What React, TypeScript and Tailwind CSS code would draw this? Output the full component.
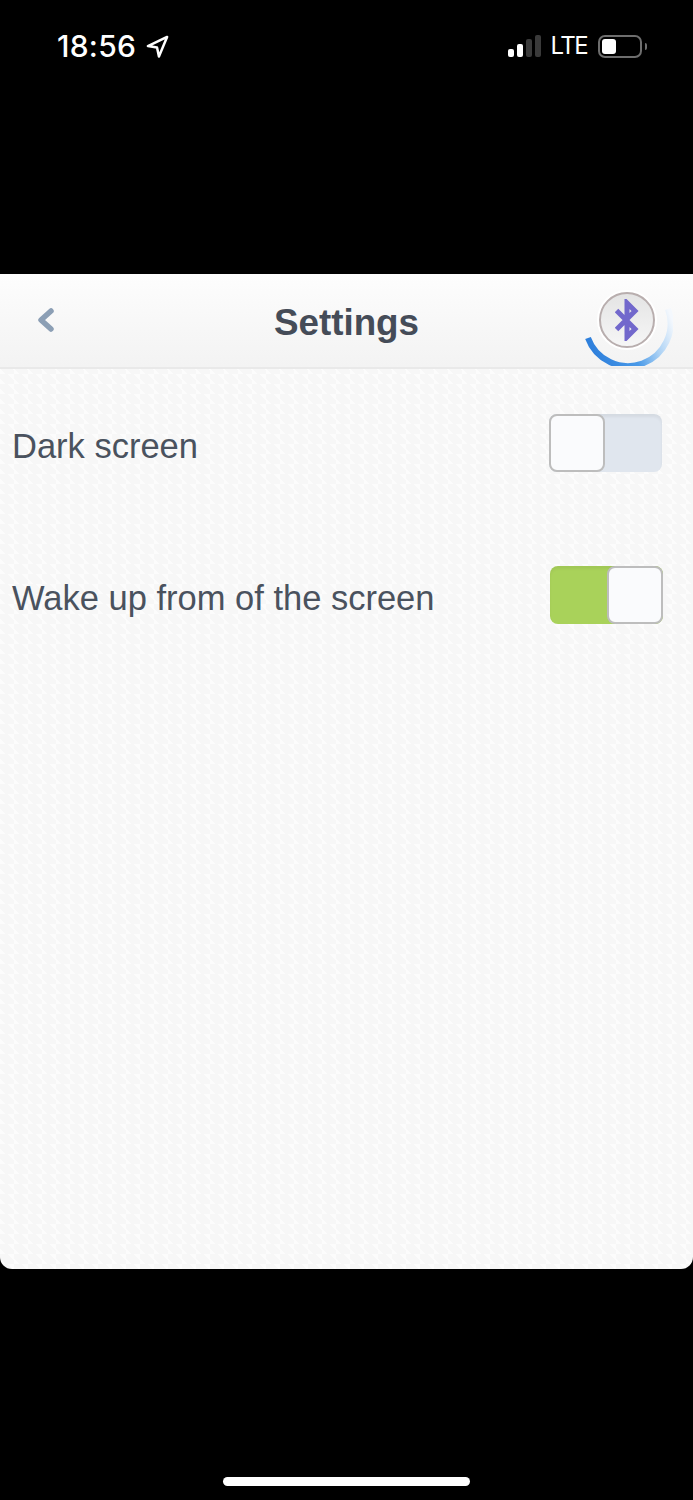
const textFont = "font-['Liberation_Sans',Arial,sans-serif]";

function StatusBar() {
  return (
    <div className="h-[274px] bg-black">
      <div className="flex h-[92px] items-center justify-between pl-[57px] pr-[46px] text-white">
        <div className="flex items-center gap-[10px]">
          <span className="font-['Inter',sans-serif] text-[30px] font-medium leading-none tracking-[0.25px]">18:56</span>
          <svg width="23" height="23" viewBox="0 0 24 24" fill="none" stroke="white" strokeWidth="2.6" strokeLinejoin="round">
            <path d="M22 2 2 11.5l9.5 1.5 2 9.5z" />
          </svg>
        </div>
        <div className="flex items-center">
          <div className="flex h-[22px] items-end gap-[3px]">
            <span className="h-[8px] w-[6px] rounded-[2px] bg-white" />
            <span className="h-[13px] w-[6px] rounded-[2px] bg-white" />
            <span className="h-[18px] w-[6px] rounded-[2px] bg-[#3a3a3a]" />
            <span className="h-[22px] w-[6px] rounded-[2px] bg-[#3a3a3a]" />
          </div>
          <span className="ml-[10px] font-['Inter',sans-serif] text-[24px] font-normal leading-none tracking-[-1.6px]">LTE</span>
          <div className="ml-[11px] flex h-[23px] w-[44px] items-center rounded-[7px] border-2 border-[#6e6e6e] p-[2px]">
            <span className="h-[15px] w-[14px] rounded-[3px] bg-white" />
          </div>
          <span className="ml-[3px] h-[7px] w-[2px] rounded-r-[2px] bg-[#6e6e6e]" />
        </div>
      </div>
    </div>
  );
}

function BluetoothButton() {
  return (
    <div className="relative h-[90px] w-[90px]">
      <svg className="absolute left-0 top-0" width="90" height="90" viewBox="0 0 90 90" fill="none">
        <defs>
          <linearGradient id="spin" x1="5" y1="62" x2="85" y2="33" gradientUnits="userSpaceOnUse">
            <stop offset="0" stopColor="#2f80dc" />
            <stop offset="0.45" stopColor="#4a9ae8" />
            <stop offset="0.72" stopColor="#a9d0f4" />
            <stop offset="1" stopColor="#f4f8fd" />
          </linearGradient>
        </defs>
        <path d="M5 62A42 42 0 0 0 85 33" stroke="url(#spin)" strokeWidth="6" />
      </svg>
      <div className="absolute left-[14px] top-[14px] flex h-[60px] w-[60px] items-center justify-center rounded-full bg-white">
        <div className="flex h-[56px] w-[56px] items-center justify-center rounded-full border-2 border-[#b8aeae] bg-gradient-to-b from-[#e4e4e4] to-[#f6f6f6]">
          <svg width="24" height="42" viewBox="0 0 24 42" fill="none" stroke="#7268cc" strokeWidth="5">
            <path d="M1.5 11.5 20 30 12 38V4L20 12 1.5 30.5" />
          </svg>
        </div>
      </div>
    </div>
  );
}

function Toggle({ on }: { on: boolean }) {
  return (
    <div className={`mb-[4px] flex h-[58px] w-[113px] rounded-[8px] shadow-[inset_0_3px_3px_rgba(0,0,0,0.05)] ${on ? "justify-end bg-[#a9d25a]" : "mr-[1px] justify-start bg-[#e0e6ee]"}`}>
      <div className="h-[58px] w-[56px] rounded-[8px] border-2 border-[#bdbdbd] bg-[#fafbfd]" />
    </div>
  );
}

function Row({ label, on }: { label: string; on: boolean }) {
  return (
    <div className="flex h-[152px] items-center justify-between pl-[12px] pr-[30px]">
      <span className={`${textFont} pt-[2px] text-[34.5px] leading-none text-[#4a525e]`}>{label}</span>
      <Toggle on={on} />
    </div>
  );
}

export default function App() {
  return (
    <div className="flex h-[1500px] w-[693px] flex-col overflow-hidden bg-black">
      <StatusBar />
      <div className="h-[995px] overflow-hidden rounded-b-[12px] bg-[#f7f7f7] bg-[linear-gradient(45deg,#fcfcfc_25%,transparent_25%,transparent_75%,#fcfcfc_75%)] bg-[size:14px_10px]">
        <div className="relative flex h-[95px] items-center justify-center border-b-2 border-[#e9e9e9] bg-gradient-to-b from-[#fdfdfd] to-[#f3f3f3] pt-[6px]">
          <svg className="absolute left-[37px] top-[33px]" width="18" height="26" viewBox="0 0 18 26" fill="none" stroke="#8c9fb5" strokeWidth="5.5" strokeLinecap="round" strokeLinejoin="round">
            <path d="M14 4 4 13l10 9" />
          </svg>
          <h1 className={`${textFont} text-[36.8px] font-bold leading-none text-[#454c58]`}>Settings</h1>
          <div className="absolute right-[20px] top-[2px]">
            <BluetoothButton />
          </div>
        </div>
        <div>
          <Row label="Dark screen" on={false} />
          <Row label="Wake up from of the screen" on={true} />
        </div>
      </div>
      <div className="flex flex-1 justify-center pt-[208px]">
        <div className="h-[9px] w-[247px] rounded-full bg-white" />
      </div>
    </div>
  );
}
